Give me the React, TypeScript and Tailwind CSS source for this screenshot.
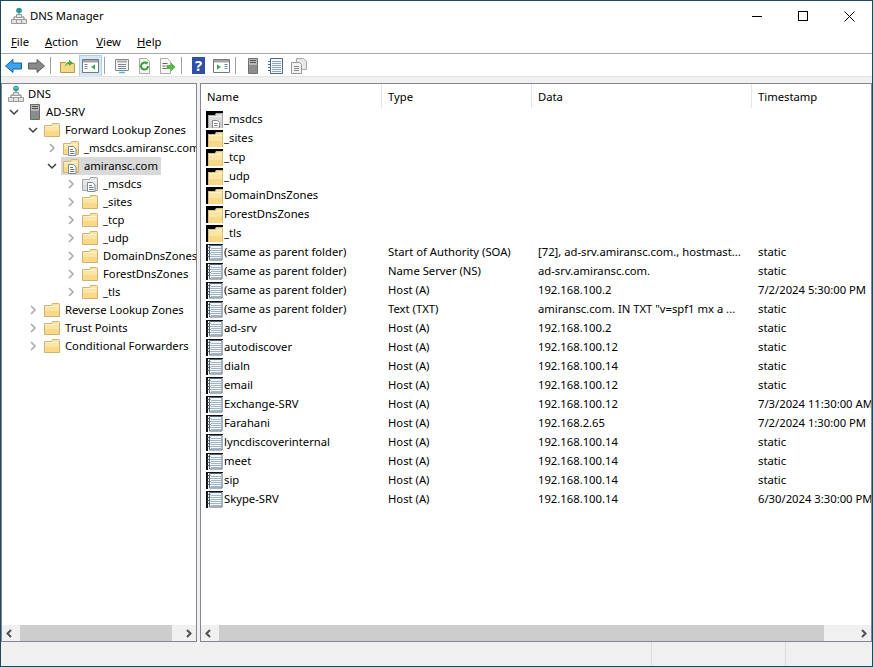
import { ReactNode } from 'react'

const font = "[font-family:'Noto_Sans','Open_Sans',sans-serif]"

function Folder({ doc, gray }: { doc?: boolean; gray?: boolean }) {
  return (
    <svg width="16" height="16" viewBox="0 0 16 16" className="shrink-0">
      <path d="M.5 14.500V3.500h7l1-2h6q1 0 1 1v12z" fill={gray ? '#e6e6e6' : '#fbe5a4'} stroke={gray ? '#a3a3a3' : '#cdb377'} />
      <path d="M1 14h14V9H1z" fill={gray ? '#dcdcdc' : '#f8d987'} />
      <path d="M1.500 4.500h13" stroke={gray ? '#f5f5f5' : '#fff3cf'} />
      {doc && (
        <>
          <path d="M5.500 6.500h5l2.500 2.500v6.500h-7.500z" fill="#fff" stroke="#7d8a96" />
          <path d="M7 9.500h3M7 11.500h4.500M7 13.500h4.500" stroke="#6f7a85" />
        </>
      )}
    </svg>
  )
}

function ListFolder({ gray }: { gray?: boolean }) {
  return (
    <span className="flex h-[17px] w-[17px] shrink-0 items-end justify-end bg-black">
      <svg width="15" height="15" viewBox="0 0 15 15">
        <path d="M0 15V2h7l1-2h7v15z" fill={gray ? '#dcdcdc' : '#fbe5a4'} />
        <path d="M0 15V9h15v6z" fill={gray ? '#d0d0d0' : '#f8d987'} />
        <path d="M.5 15V2.500h7l1-2h6V15" fill="none" stroke={gray ? '#a5a5a5' : '#d8bd7c'} />
        <path d="M1 3.500h13" stroke={gray ? '#eeeeee' : '#fff3cf'} />
        {gray && <path d="M4.500 7.500h5l2 2v5.500h-7z" fill="#fff" stroke="#8a8a8a" />}
        {gray && <path d="M6 10.500h3.500M6 12.500h3.500" stroke="#888" />}
      </svg>
    </span>
  )
}

function RecordIcon() {
  return (
    <svg width="17" height="17" viewBox="0 0 17 17" className="shrink-0">
      <path d="M0 0h17v1H0zM0 0h2v17H0z" fill="#111" />
      <path d="M2 1h15v16H2z" fill="#fff" />
      <path d="M3.500 1.500h12.500v14.500h-12.500z" fill="#f4f7fa" stroke="#51697c" />
      <path d="M5 4.500h10M5 6.500h10M5 8.500h10M5 10.500h10M5 12.500h10M5 14.500h10" stroke="#a3b5c4" />
      <path d="M1.500 3.500h3M1.500 6.500h3M1.500 9.500h3M1.500 12.500h3" stroke="#51697c" />
    </svg>
  )
}

function ServerIcon({ h = 16 }: { h?: number }) {
  return (
    <svg width="10" height={h} viewBox="0 0 10 16" className="shrink-0">
      <path d="M.5.5h9v15h-9z" fill="#b4b4b4" stroke="#6b6b6b" />
      <path d="M2 2.500h6M2 4.500h6" stroke="#555" />
      <path d="M1 7h8v8H1z" fill="#8c8c8c" />
      <path d="M2 13h2v1.500H2z" fill="#3fc04f" />
    </svg>
  )
}

function DnsIcon() {
  return (
    <svg width="16" height="18" viewBox="0 0 16 18" className="shrink-0">
      <circle cx="8" cy="3.500" r="2.800" fill="#2b9aa0" />
      <path d="M6 3h4" stroke="#7fe0c0" />
      <path d="M8 6v4M3 12v-2h10v2" fill="none" stroke="#777" />
      <path d="M5.500 7.500h5v3h-5zM.5 12.500h5v4h-5zM10.500 12.500h5v4h-5zM5.500 12.500h5v4h-5z" fill="#e4e4e4" stroke="#999" />
    </svg>
  )
}

function Chevron({ open, light }: { open?: boolean; light?: boolean }) {
  return (
    <svg width="10" height="10" viewBox="0 0 10 10" className="shrink-0">
      <path
        d={open ? 'M1 3l4 4 4-4' : 'M3 1l4 4-4 4'}
        fill="none"
        stroke={light ? '#a6a6a6' : '#404040'}
        strokeWidth="1.500"
      />
    </svg>
  )
}

type TreeRow = {
  label: string
  pad: string
  chevron?: 'open' | 'closed'
  icon: ReactNode
  selected?: boolean
}

const tree: TreeRow[] = [
  { label: 'DNS', pad: 'pl-[6px]', icon: <DnsIcon /> },
  { label: 'AD-SRV', pad: 'pl-[7px]', chevron: 'open', icon: <span className="ml-[5px] mr-[1px] flex"><ServerIcon /></span> },
  { label: 'Forward Lookup Zones', pad: 'pl-[26px]', chevron: 'open', icon: <Folder /> },
  { label: '_msdcs.amiransc.com', pad: 'pl-[45px]', chevron: 'closed', icon: <Folder doc /> },
  { label: 'amiransc.com', pad: 'pl-[45px]', chevron: 'open', icon: <Folder doc />, selected: true },
  { label: '_msdcs', pad: 'pl-[64px]', chevron: 'closed', icon: <Folder doc gray /> },
  { label: '_sites', pad: 'pl-[64px]', chevron: 'closed', icon: <Folder /> },
  { label: '_tcp', pad: 'pl-[64px]', chevron: 'closed', icon: <Folder /> },
  { label: '_udp', pad: 'pl-[64px]', chevron: 'closed', icon: <Folder /> },
  { label: 'DomainDnsZones', pad: 'pl-[64px]', chevron: 'closed', icon: <Folder /> },
  { label: 'ForestDnsZones', pad: 'pl-[64px]', chevron: 'closed', icon: <Folder /> },
  { label: '_tls', pad: 'pl-[64px]', chevron: 'closed', icon: <Folder /> },
  { label: 'Reverse Lookup Zones', pad: 'pl-[26px]', chevron: 'closed', icon: <Folder /> },
  { label: 'Trust Points', pad: 'pl-[26px]', chevron: 'closed', icon: <Folder /> },
  { label: 'Conditional Forwarders', pad: 'pl-[26px]', chevron: 'closed', icon: <Folder /> },
]

const folders = ['_msdcs', '_sites', '_tcp', '_udp', 'DomainDnsZones', 'ForestDnsZones', '_tls']

const records = [
  ['(same as parent folder)', 'Start of Authority (SOA)', '[72], ad-srv.amiransc.com., hostmast...', 'static'],
  ['(same as parent folder)', 'Name Server (NS)', 'ad-srv.amiransc.com.', 'static'],
  ['(same as parent folder)', 'Host (A)', '192.168.100.2', '7/2/2024 5:30:00 PM'],
  ['(same as parent folder)', 'Text (TXT)', 'amiransc.com.  IN TXT "v=spf1 mx a ...', 'static'],
  ['ad-srv', 'Host (A)', '192.168.100.2', 'static'],
  ['autodiscover', 'Host (A)', '192.168.100.12', 'static'],
  ['dialn', 'Host (A)', '192.168.100.14', 'static'],
  ['email', 'Host (A)', '192.168.100.12', 'static'],
  ['Exchange-SRV', 'Host (A)', '192.168.100.12', '7/3/2024 11:30:00 AM'],
  ['Farahani', 'Host (A)', '192.168.2.65', '7/2/2024 1:30:00 PM'],
  ['lyncdiscoverinternal', 'Host (A)', '192.168.100.14', 'static'],
  ['meet', 'Host (A)', '192.168.100.14', 'static'],
  ['sip', 'Host (A)', '192.168.100.14', 'static'],
  ['Skype-SRV', 'Host (A)', '192.168.100.14', '6/30/2024 3:30:00 PM'],
]

const cols = 'grid grid-cols-[181px_150px_220px_121px]'

function Divider() {
  return <span className="ml-[2px] mr-[5px] h-[17px] w-px bg-[#a0a0a0]" />
}

function Tool({ children, active }: { children: ReactNode; active?: boolean }) {
  return (
    <span className={`flex h-[22px] w-[23px] items-center justify-center ${active ? 'border border-[#a8d2f0] bg-[#d5e8f8]' : ''}`}>
      {children}
    </span>
  )
}

function Toolbar() {
  return (
    <div className="flex h-[23px] items-center border-t border-[#a9a9a9] bg-white pl-[1px] pt-px">
      <Tool>
        <svg width="17" height="14" viewBox="0 0 17 14">
          <path d="M.5 7L8 .5v3.500h8.500v6H8v3.500z" fill="#3aa3ee" stroke="#1c5f9c" />
        </svg>
      </Tool>
      <Tool>
        <svg width="17" height="14" viewBox="0 0 17 14">
          <path d="M16.500 7L9 .5v3.500H.5v6H9v3.500z" fill="#8a8a8a" stroke="#5c5c5c" />
        </svg>
      </Tool>
      <Divider />
      <Tool>
        <svg width="15" height="15" viewBox="0 0 15 15">
          <path d="M.5 14.500V4.500h5l1 1h8v9z" fill="#f5d98a" stroke="#b8994a" />
          <path d="M5 9c0-3 2-5 4-5V1.500L13 5 9 8V6C7 6 6 7 5 9z" fill="#4fa836" />
        </svg>
      </Tool>
      <Tool active>
        <svg width="17" height="14" viewBox="0 0 17 14">
          <path d="M.5.5h16v13H.5z" fill="#fff" stroke="#777" />
          <path d="M1 1h15v2.500H1z" fill="#a4a4a4" />
          <path d="M2.500 5.500h3M2.500 7.500h3M2.500 9.500h3" stroke="#6a8a9a" />
          <path d="M13 5.500v5L9 8z" fill="#2fa84f" />
        </svg>
      </Tool>
      <Divider />
      <Tool>
        <svg width="16" height="16" viewBox="0 0 16 16">
          <path d="M1.500 1.500h13v11h-13z" fill="#f4f4f4" stroke="#888" />
          <path d="M3 3.500h10" stroke="#aaa" strokeWidth="2" />
          <path d="M4 6.500h8M4 8.500h8M4 10.500h8" stroke="#7a8a99" />
          <path d="M5 14.500h6" stroke="#5aaee0" strokeWidth="1.500" />
        </svg>
      </Tool>
      <Tool>
        <svg width="15" height="16" viewBox="0 0 15 16">
          <path d="M2.500.5h7l3 3v12h-10z" fill="#f7f7f7" stroke="#aaa" />
          <path d="M11 8a3.500 3.500 0 1 1-1.500-2.800" fill="none" stroke="#3d9a35" strokeWidth="2" />
          <path d="M8 3.500l3 .5-1 3z" fill="#3d9a35" />
        </svg>
      </Tool>
      <Tool>
        <svg width="17" height="16" viewBox="0 0 17 16">
          <path d="M1.500.5h7l3 3v12h-10z" fill="#f7f7f7" stroke="#aaa" />
          <path d="M3.500 5.500h5M3.500 8h3M3.500 10.500h4" stroke="#666" />
          <path d="M7.500 7h4.500V4.500L16.500 9 12 13.500V11H7.500z" fill="#58b646" />
        </svg>
      </Tool>
      <Divider />
      <Tool>
        <span className={`flex h-[17px] w-[13px] items-center justify-center bg-[#2f4fa8] text-[15px] font-bold leading-none text-white ${font}`}>?</span>
      </Tool>
      <Tool>
        <svg width="17" height="14" viewBox="0 0 17 14">
          <path d="M.5.5h16v13H.5z" fill="#fff" stroke="#777" />
          <path d="M1 1h15v2.500H1z" fill="#a4a4a4" />
          <path d="M11.500 5.500h3M11.500 7.500h3M11.500 9.500h3" stroke="#6a8a9a" />
          <path d="M4 5.500v5L8 8z" fill="#2fa84f" />
        </svg>
      </Tool>
      <Divider />
      <Tool>
        <svg width="10" height="18" viewBox="0 0 10 16">
          <path d="M.5.5h9v15h-9z" fill="#b8b8b8" stroke="#707070" />
          <path d="M2 2.500h6M2 4.500h6" stroke="#555" />
          <path d="M1 7h8v8H1z" fill="#8e8e8e" />
        </svg>
      </Tool>
      <Tool>
        <svg width="15" height="16" viewBox="0 0 15 16">
          <path d="M2.500.5h12v15h-12z" fill="#f4f7fa" stroke="#51697c" />
          <path d="M4 3.500h9M4 5.500h9M4 7.500h9M4 9.500h9M4 11.500h9M4 13.500h9" stroke="#8fa4b5" />
          <path d="M0 3.500h3M0 6.500h3M0 9.500h3M0 12.500h3" stroke="#51697c" />
        </svg>
      </Tool>
      <Tool>
        <svg width="16" height="16" viewBox="0 0 16 16">
          <path d="M5.500.5h7l3 3v8h-10z" fill="#e8e8e8" stroke="#aaa" />
          <path d="M.5 4.500h8l2 2v9h-10z" fill="#f2f2f2" stroke="#999" />
          <path d="M3 8.500h5M3 10.500h5M3 12.500h5" stroke="#888" />
        </svg>
      </Tool>
    </div>
  )
}

function ScrollBar({ left, right }: { left: string; right: string }) {
  return (
    <div className="flex h-[16px] shrink-0 bg-[#f0f0f0]">
      <span className={`flex items-center pl-[3px] ${left}`}>
        <svg width="8" height="9" viewBox="0 0 8 9">
          <path d="M6 1L2.500 4.500 6 8" fill="none" stroke="#505050" strokeWidth="2" />
        </svg>
      </span>
      <span className="flex-1 bg-[#cdcdcd]" />
      <span className={`flex items-center justify-end pr-[3px] ${right}`}>
        <svg width="8" height="9" viewBox="0 0 8 9">
          <path d="M2 1l3.500 3.500L2 8" fill="none" stroke="#505050" strokeWidth="2" />
        </svg>
      </span>
    </div>
  )
}

export default function App() {
  return (
    <div className={`flex h-[667px] w-[873px] flex-col overflow-hidden border border-[#1b4a5e] bg-[#f0f0f0] text-[11.25px] text-black ${font}`}>
      {/* title bar */}
      <div className="flex h-[30px] shrink-0 items-center bg-white pl-[10px]">
        <svg width="16" height="18" viewBox="0 0 16 18" className="shrink-0">
          <circle cx="8" cy="3.500" r="2.800" fill="#2b9aa0" />
          <path d="M8 6v4M3 12v-2h10v2" fill="none" stroke="#777" />
          <path d="M5.500 7.500h5v3h-5zM.5 12.500h5v4h-5zM10.500 12.500h5v4h-5zM5.500 12.500h5v4h-5z" fill="#e4e4e4" stroke="#999" />
        </svg>
        <span className="ml-[3px] flex-1 pt-px">DNS Manager</span>
        <div className="flex items-center">
          <span className="flex h-[30px] w-[46px] items-center justify-center">
            <span className="h-px w-[10px] bg-black" />
          </span>
          <span className="flex h-[30px] w-[46px] items-center justify-center">
            <span className="size-[10px] border border-black" />
          </span>
          <span className="flex h-[30px] w-[46px] items-center justify-center">
            <svg width="11" height="11" viewBox="0 0 11 11">
              <path d="M.5.5l10 10M10.500.5l-10 10" stroke="#000" />
            </svg>
          </span>
        </div>
      </div>

      {/* menu */}
      <div className="flex h-[22px] shrink-0 items-center gap-[16px] bg-white pl-[10px] pt-px">
        <span><u>F</u>ile</span>
        <span className="mr-[2px]"><u>A</u>ction</span>
        <span><u>V</u>iew</span>
        <span><u>H</u>elp</span>
      </div>

      <Toolbar />
      <div className="h-[7px] shrink-0 border-t border-[#e3e3e3] bg-[#f0f0f0]" />

      {/* panes */}
      <div className="flex min-h-0 flex-1 gap-[3px]">
        <div className="flex w-[196px] flex-col border border-[#828790] bg-white">
          <div className="flex-1 overflow-hidden pt-px">
            {tree.map((row) => (
              <div key={row.label} className={`flex h-[18px] items-center whitespace-nowrap ${row.pad}`}>
                {row.chevron ? (
                  <Chevron open={row.chevron === 'open'} light={row.chevron === 'closed'} />
                ) : null}
                <span className={`flex h-[18px] items-center ${row.selected ? 'ml-[4px] bg-[#d9d9d9] pl-[2px] pr-[3px]' : row.chevron ? 'ml-[6px]' : ''}`}>
                  {row.icon}
                  <span className={row.label === 'DNS' ? 'ml-[4px]' : 'ml-[5px]'}>
                    {row.label}
                  </span>
                </span>
              </div>
            ))}
          </div>
          <ScrollBar left="w-[18px]" right="w-[24px]" />
        </div>

        <div className="flex min-w-0 flex-1 flex-col border border-[#828790] bg-white">
          <div className={`${cols} h-[24px] shrink-0 items-center`}>
            {['Name', 'Type', 'Data', 'Timestamp'].map((h, i) => (
              <span key={h} className={`flex h-full items-center pl-[6px] pt-[2px] ${i < 3 ? 'border-r border-[#e5e5e5]' : ''}`}>
                {h}
              </span>
            ))}
          </div>
          <div className="flex-1 overflow-hidden pt-[2px]">
            {folders.map((name, i) => (
              <div key={name} className="flex h-[19px] items-center gap-px pl-[5px]">
                <ListFolder gray={i === 0} />
                <span>{name}</span>
              </div>
            ))}
            {records.map((r, i) => (
              <div key={i} className={`${cols} h-[19px] items-center whitespace-nowrap`}>
                <span className="flex items-center gap-px pl-[5px]">
                  <RecordIcon />
                  {r[0]}
                </span>
                <span className="pl-[6px]">{r[1]}</span>
                <span className="pl-[6px]">{r[2]}</span>
                <span className="overflow-hidden pl-[6px]">{r[3]}</span>
              </div>
            ))}
          </div>
          <ScrollBar left="w-[18px]" right="w-[47px]" />
        </div>
      </div>

      {/* status bar */}
      <div className="flex h-[24px] shrink-0 bg-[#f0f0f0]">
        <span className="flex-1" />
        <span className="w-[134px] border-l border-[#dcdcdc]" />
        <span className="w-[87px] border-l border-[#dcdcdc]" />
      </div>
    </div>
  )
}
